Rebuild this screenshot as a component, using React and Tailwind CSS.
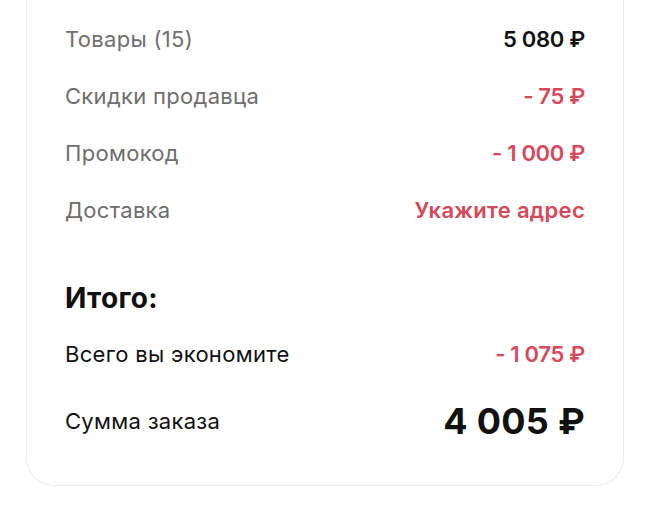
import React from 'react';

const rows = [
  { label: 'Товары (15)', value: '5 080 ₽', red: false, num: true },
  { label: 'Скидки продавца', value: '- 75 ₽', red: true, num: true },
  { label: 'Промокод', value: '- 1 000 ₽', red: true, num: true },
  { label: 'Доставка', value: 'Укажите адрес', red: true, num: false },
];

export default function App() {
  return (
    <div className="min-h-[515px] bg-white px-[26px] font-['Inter','Noto_Sans',sans-serif] tracking-[0.3px]">
      <div className="flex flex-col rounded-b-[28px] border border-t-0 border-[#ececec] bg-white px-[38px] pt-[24px] pb-[42px]">
        {/* Breakdown */}
        <div className="flex flex-col gap-[27px]">
          {rows.map((row) => (
            <div key={row.label} className="flex items-center justify-between text-[22px] leading-[30px]">
              <span className="text-[#6e6e6e]">{row.label}</span>
              <span
                className={`font-semibold ${row.num ? 'tracking-[-0.3px]' : ''} ${
                  row.red ? 'text-[#d9475a]' : 'text-[#111]'
                }`}
              >
                {row.value}
              </span>
            </div>
          ))}
        </div>

        {/* Total */}
        <h3 className="mt-[56px] text-[28px] leading-[34px] font-bold text-[#111]">Итого:</h3>
        <div className="mt-[24px] flex items-center justify-between text-[22px] leading-[30px]">
          <span className="text-[#111]">Всего вы экономите</span>
          <span className="font-semibold tracking-[-0.3px] text-[#d9475a]">- 1 075 ₽</span>
        </div>
        <div className="mt-[30px] flex items-center justify-between leading-[44px]">
          <span className="text-[22px] text-[#111]">Сумма заказа</span>
          <span className="text-[36px] font-bold text-[#111]">4 005 ₽</span>
        </div>
      </div>
    </div>
  );
}
